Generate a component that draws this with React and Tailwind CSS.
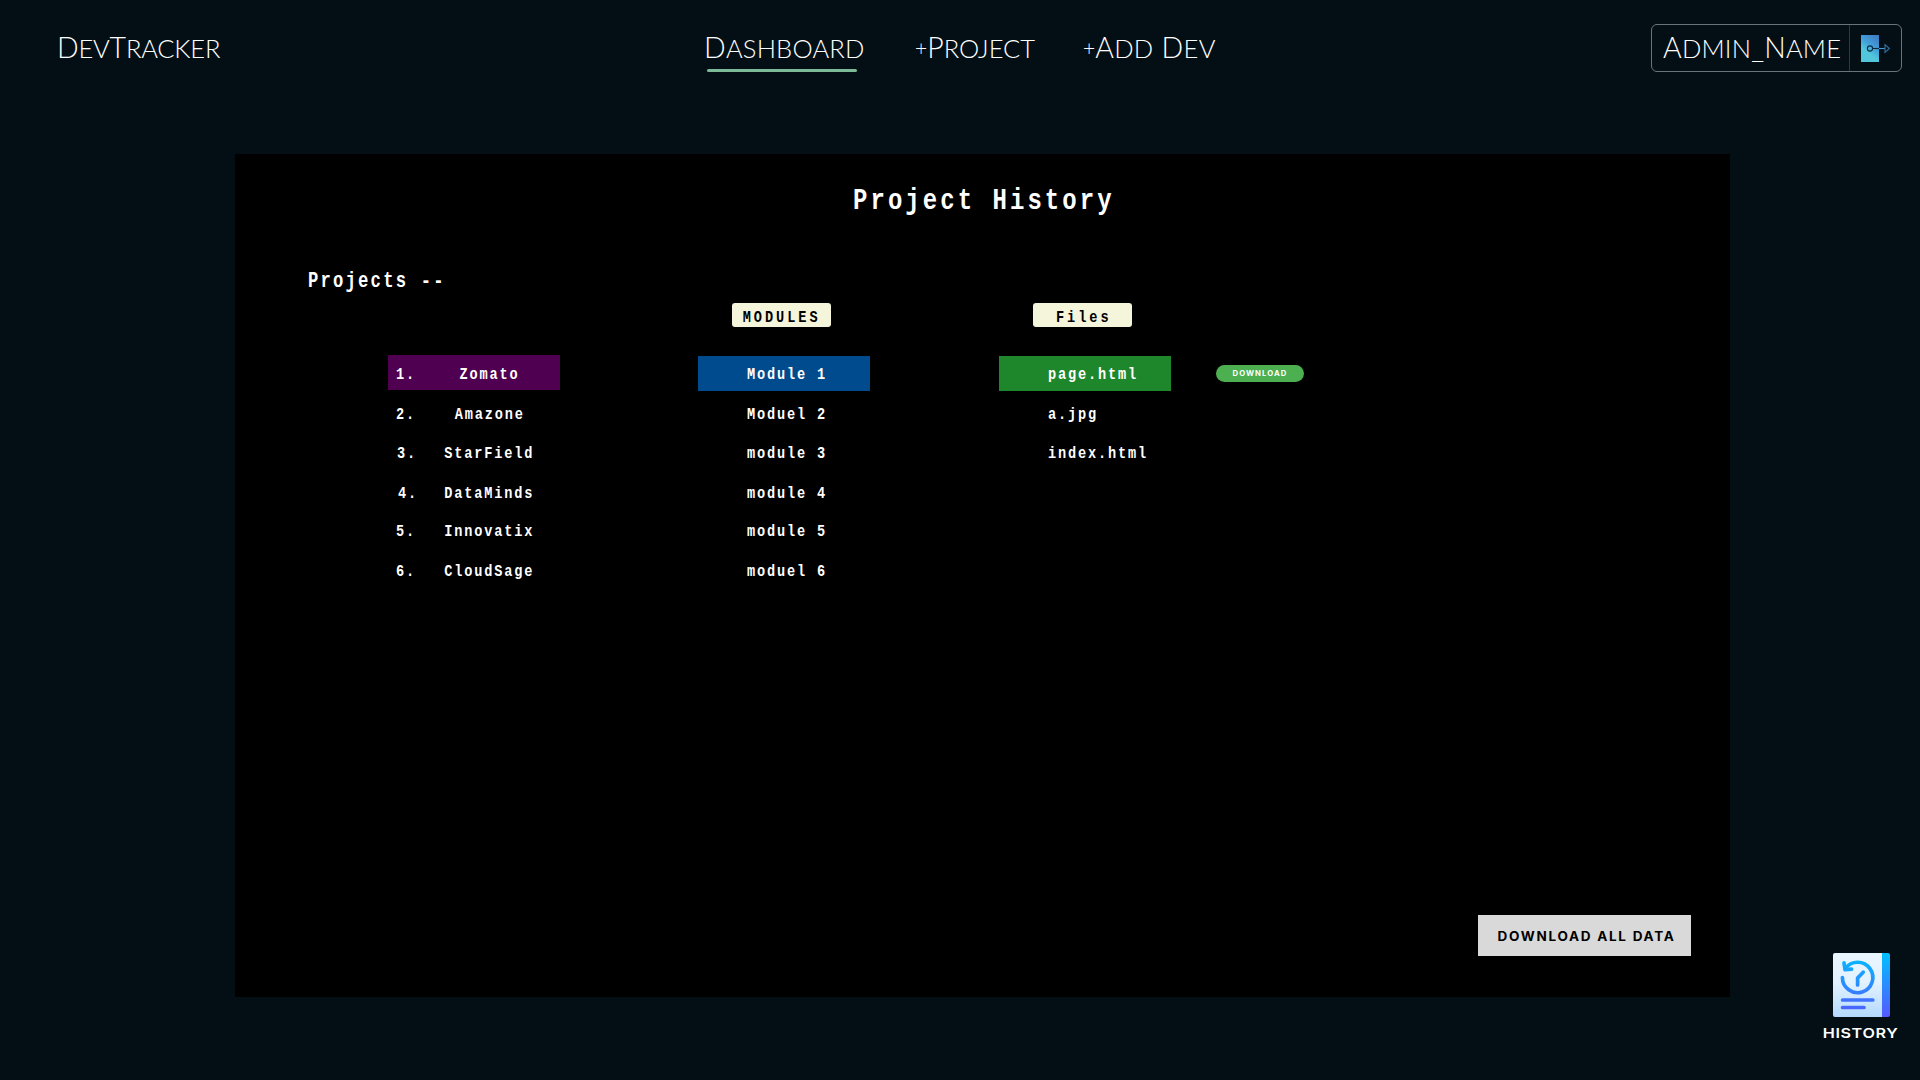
const NAV_FONT = "font-['Lato',sans-serif] font-light text-white whitespace-pre";
const MONO = "font-['Liberation_Mono',monospace] font-bold inline-block scale-x-[0.8] origin-left whitespace-pre";
const ITEM = "text-[17px] tracking-[2.3px]";

// Draws lowercase runs as slightly smaller capitals and a leading plus as a small raised sign.
function SmallCaps({ children, className = "" }) {
  return (
    <span className={`${NAV_FONT} inline-block align-top uppercase text-[28.5px] leading-[46px] ${className}`}>
      {children.split(/([a-z]+|\+)/).map((part, i) =>
        part === "+" ? (
          <span key={i} className="inline-block -translate-y-[2px] text-[21px] leading-none tracking-[0px]">+</span>
        ) : i % 2 ? (
          <span key={i} className="text-[25.5px]">{part}</span>
        ) : (
          part
        )
      )}
    </span>
  );
}

function DoorIcon() {
  return (
    <svg width="30" height="28" viewBox="0 0 30 28" fill="none">
      <defs>
        <linearGradient id="door" x1="0.8" y1="0" x2="0.3" y2="1">
          <stop offset="0" stopColor="#3f7dc4" />
          <stop offset="0.4" stopColor="#429fd9" />
          <stop offset="0.7" stopColor="#52c7dc" />
          <stop offset="1" stopColor="#52c7dc" />
        </linearGradient>
      </defs>
      <rect x="0" y="0" width="18" height="27" fill="url(#door)" />
      <circle cx="9" cy="13.5" r="2.6" stroke="#0b2c40" strokeWidth="1.1" />
      <path d="M11.6 13.5H18" stroke="#0b2c40" strokeWidth="1.1" />
      <path d="M18 13.5H24" stroke="#3c9ad4" strokeWidth="1.1" />
      <path d="M24 9.6V17.4L28.4 13.5Z" stroke="#34719f" strokeWidth="1.1" />
    </svg>
  );
}

function HistoryIcon() {
  return (
    <svg width="57" height="64" viewBox="0 0 57 64" fill="none">
      <defs>
        <linearGradient id="page" x1="0" y1="0" x2="0" y2="1">
          <stop offset="0" stopColor="#eaf6ff" />
          <stop offset="0.45" stopColor="#e3f2ff" />
          <stop offset="1" stopColor="#b3dafe" />
        </linearGradient>
        <linearGradient id="ink" gradientUnits="userSpaceOnUse" x1="0" y1="0" x2="0" y2="64">
          <stop offset="0" stopColor="#00c0ff" />
          <stop offset="1" stopColor="#5558ff" />
        </linearGradient>
      </defs>
      <path d="M2 0H49V64H2Q0 64 0 62V2Q0 0 2 0Z" fill="url(#page)" />
      <path d="M49 0H55Q57 0 57 2V62Q57 64 55 64H49Z" fill="url(#ink)" />
      <g stroke="url(#ink)" strokeWidth="3.7" strokeLinecap="round" strokeLinejoin="round">
        <path d="M9.4 24.5A15.2 15.2 0 1 0 12.4 15.4" />
        <path d="M11 9.8L12 16.7L18.6 16.2" />
        <path d="M30.2 19.2L24.6 25V32" />
        <path d="M9.6 47.001L39.8 47" />
        <path d="M9.6 54.501L31 54.5" />
      </g>
    </svg>
  );
}

const GAPS = ["", "mt-[5px]", "mt-[4px]", "mt-[5px]", "mt-[3px]", "mt-[5px]"];
const projects = ["Zomato", "Amazone", "StarField", "DataMinds", "Innovatix", "CloudSage"];
const modules = ["Module 1", "Moduel 2", "module 3", "module 4", "module 5", "moduel 6"];
const files = ["page.html", "a.jpg", "index.html"];
const NUMBER_PAD = ["pl-[8px]", "pl-[8px]", "pl-[9px]", "pl-[10px]", "pl-[8px]", "pl-[8px]"];

function Column({ title, items, active, pad, titlePad = "" }) {
  return (
    <section className="w-[172px]">
      <div className={`ml-[34px] flex h-6 w-[99px] justify-center rounded-[3px] bg-[#f5f5dc] ${titlePad}`}>
        <span className="w-[75px] text-center">
          <span className={`${MONO} origin-center! text-[17px] leading-[30px] tracking-[3.7px] text-black -mx-3`}>{title}</span>
        </span>
      </div>
      <ul className="mt-[29px]">
        {items.map((item, i) => (
          <li key={item} className={`h-[35px] ${pad} ${GAPS[i]} ${i === 0 ? active : ""}`}>
            <span className={`${MONO} ${ITEM} leading-[37px]`}>{item}</span>
          </li>
        ))}
      </ul>
    </section>
  );
}

export default function App() {
  return (
    <div className="flex h-[1080px] w-[1920px] flex-col overflow-hidden bg-[#030f15] text-white">
      <header className="flex h-[154px] items-start pt-6">
        <div className="w-[704px] pl-[57px]">
          <SmallCaps className="tracking-[-0.2px]">DevTracker</SmallCaps>
        </div>
        <nav className="flex w-[947px]">
          <div className="w-[211px]">
            <SmallCaps className="tracking-[0.2px]">Dashboard</SmallCaps>
            <div className="-mt-[2px] ml-[3px] h-[3px] w-[150px] rounded-full bg-[#7dba98]" />
          </div>
          <div className="w-[168px]">
            <SmallCaps>+Project</SmallCaps>
          </div>
          <SmallCaps className="tracking-[0.3px]">+Add Dev</SmallCaps>
        </nav>
        <div className="flex h-12 w-[251px] rounded-md border border-[#69737a]">
          <div className="w-[198px] border-r border-[#2d393f] pl-[11px]">
            <SmallCaps className="leading-[44px]! tracking-[0.2px]">Admin_Name</SmallCaps>
          </div>
          <div className="pl-[11px] pt-[10px]">
            <DoorIcon />
          </div>
        </div>
      </header>

      <div className="flex">
        <main className="ml-[235px] flex h-[843px] w-[1495px] flex-col bg-black">
          <h1 className="h-[97px] pl-[618px]">
            <span className={`${MONO} text-[30px] leading-[94px] tracking-[3.8px]`}>Project History</span>
          </h1>
          <h2 className="h-[52px] pl-[73px]">
            <span className={`${MONO} text-[21.5px] leading-[60px] tracking-[2.75px]`}>Projects --</span>
          </h2>
          <div className="flex flex-1 pl-[153px]">
            <ul className="mt-[52px] w-[310px]">
              {projects.map((name, i) => (
                <li key={name} className={`flex h-[35px] w-[172px] ${GAPS[i]} ${i === 0 ? "bg-[#500050]" : ""}`}>
                  <span className={`w-[36px] ${NUMBER_PAD[i]}`}>
                    <span className={`${MONO} ${ITEM} leading-[39px]`}>{i + 1}.</span>
                  </span>
                  <span className="w-[131px] text-center">
                    <span className={`${MONO} ${ITEM} origin-center! leading-[39px]`}>{name}</span>
                  </span>
                </li>
              ))}
            </ul>
            <Column title="MODULES" items={modules} active="bg-[#004b8d]" pad="pl-[49px]" />
            <div className="w-[129px]" />
            <Column title="Files" items={files} active="bg-[#1f872b]" pad="pl-[49px]" titlePad="pl-[2px]" />
            <button className="ml-[45px] mt-[62px] h-[17px] w-[88px] rounded-full bg-[#4caf50] text-center font-['Inter',sans-serif] text-[7px] font-bold leading-[17px] text-white">
              <span className="inline-block scale-x-[1.1] tracking-[1px]">DOWNLOAD</span>
            </button>
          </div>
          <button className="mb-[41px] ml-[1243px] h-[41px] w-[213px] bg-[#d9d9d9] pl-[3px] pt-px font-['Inter',sans-serif] text-[12.5px] font-bold leading-[41px] text-black whitespace-nowrap">
            <span className="inline-block scale-x-[1.08] tracking-[1.6px]">DOWNLOAD ALL DATA</span>
          </button>
        </main>
        <aside className="ml-[89px] mt-[799px] flex w-[84px] flex-col items-center">
          <HistoryIcon />
          <span className="mt-[8px] inline-block scale-x-[1.2] font-['Inter',sans-serif] text-[13.5px] font-semibold leading-[16px] tracking-[0.5px]">HISTORY</span>
        </aside>
      </div>
    </div>
  );
}
